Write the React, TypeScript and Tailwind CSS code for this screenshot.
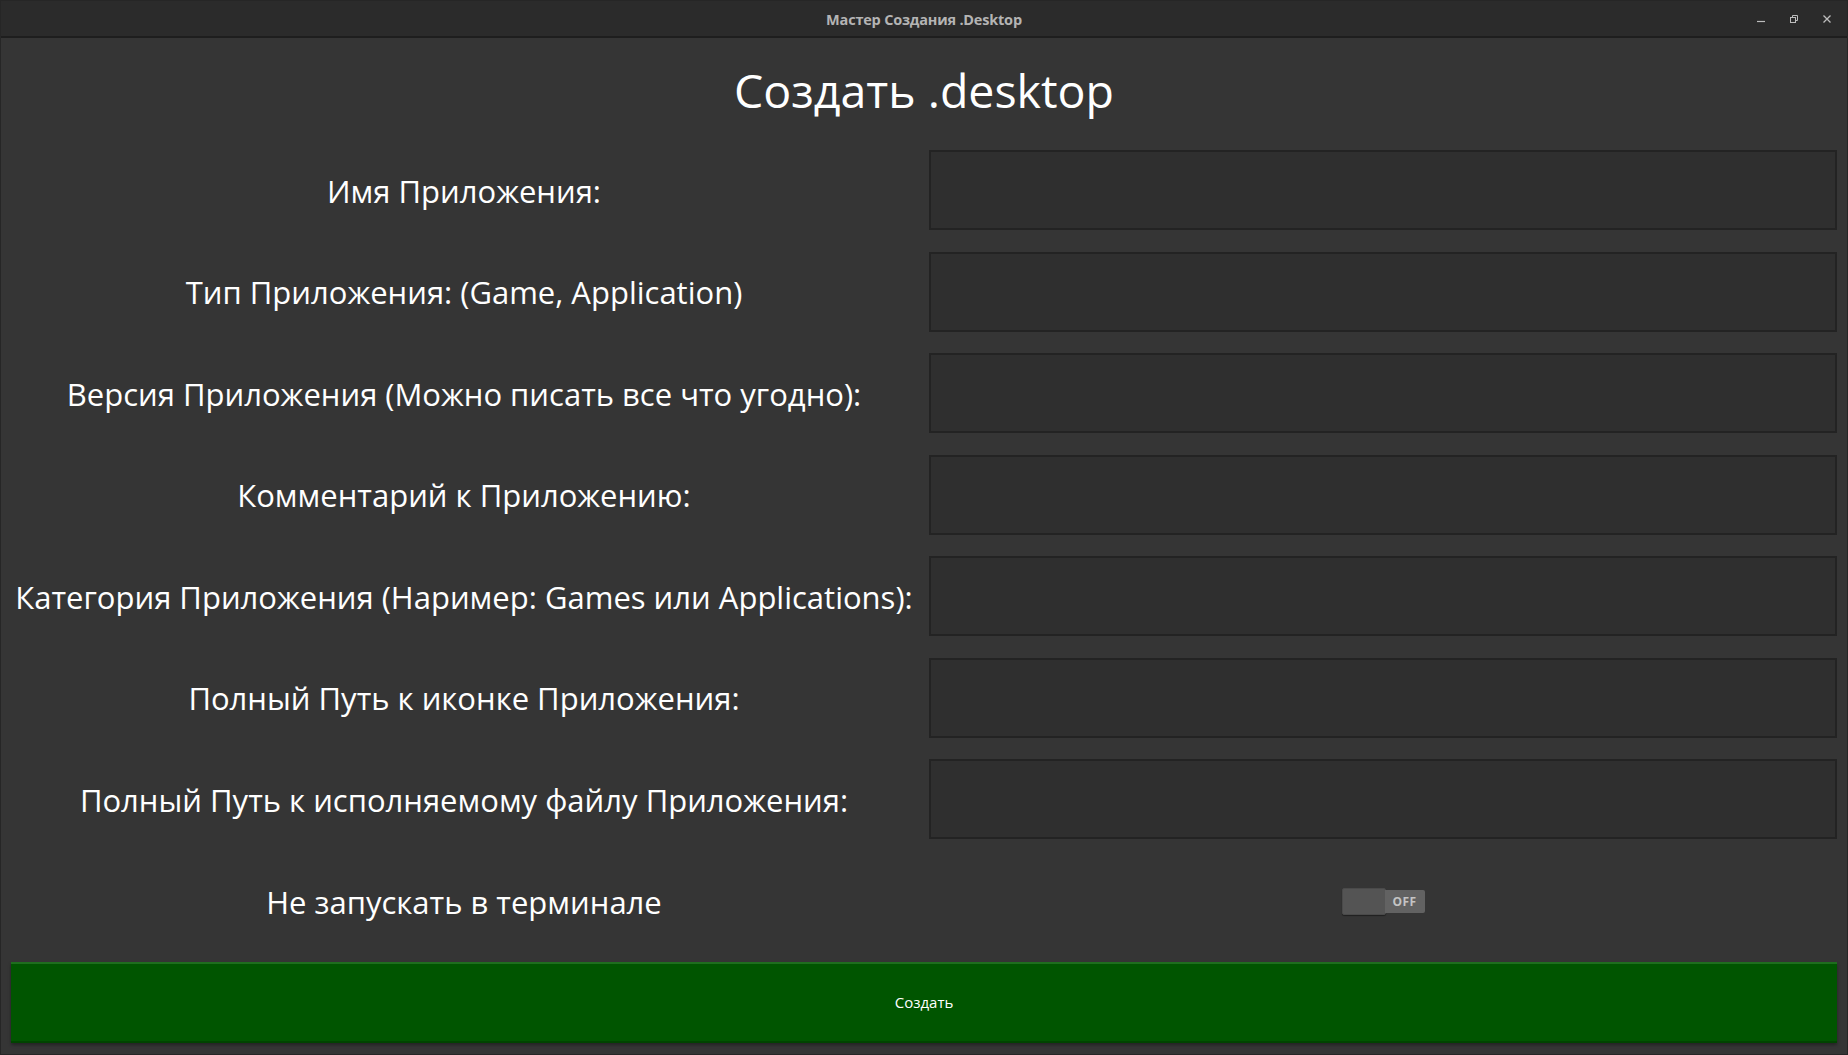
import { useState } from "react";

const fields = [
  "Имя Приложения:",
  "Тип Приложения: (Game, Application)",
  "Версия Приложения (Можно писать все что угодно):",
  "Комментарий к Приложению:",
  "Категория Приложения (Наример: Games или Applications):",
  "Полный Путь к иконке Приложения:",
  "Полный Путь к исполняемому файлу Приложения:",
];

export default function App() {
  const [values, setValues] = useState<string[]>(fields.map(() => ""));
  const [terminal, setTerminal] = useState(false);

  return (
    <div
      className="w-[1848px] h-[1055px] flex flex-col bg-[#353535] text-white border border-[#262626] overflow-hidden"
      style={{ fontFamily: '"Open Sans", "Noto Sans", sans-serif' }}
    >
      {/* title bar */}
      <div className="relative h-[37px] shrink-0 flex items-center justify-center bg-[#2b2b2b] border-b-2 border-[#1e1e1e]">
        <span className="text-[14.5px] font-bold text-[#b4b4b4] tracking-[-0.2px] pt-[2px]">
          Мастер Создания .Desktop
        </span>
        <div className="absolute right-0 top-0 h-full flex items-center gap-[21px] pr-[14px]">
          <svg width="12" height="12" viewBox="0 0 12 12">
            <path d="M2 8.5h8" stroke="#bdbdbd" strokeWidth="1.2" />
          </svg>
          <svg width="12" height="12" viewBox="0 0 12 12">
            <rect x="2.5" y="4.5" width="5" height="5" fill="none" stroke="#bdbdbd" strokeWidth="1" />
            <path d="M4.5 4.5V2.5h5v5h-2" fill="none" stroke="#bdbdbd" strokeWidth="1" />
          </svg>
          <svg width="12" height="12" viewBox="0 0 12 12">
            <path d="M2.5 2.5l7 7M9.5 2.5l-7 7" stroke="#bdbdbd" strokeWidth="1.3" />
          </svg>
        </div>
      </div>

      {/* heading */}
      <div className="h-[91px] shrink-0 flex items-center justify-center pt-[13px]">
        <h1 className="text-[46.5px] leading-none text-white">Создать .desktop</h1>
      </div>

      <div className="flex-1 flex flex-col px-[10px] pt-[21px] gap-[21.5px]">
        <div className="grid grid-cols-[906px_1fr] gap-x-[12px] gap-y-[21.5px]">
          {fields.map((label, i) => (
            <div key={label} className="contents">
              <div className="h-[80px] flex items-center justify-center pt-[2px] text-[31px] text-white whitespace-nowrap">
                {label}
              </div>
              <input
                type="text"
                value={values[i]}
                onChange={(e) => {
                  const next = [...values];
                  next[i] = e.target.value;
                  setValues(next);
                }}
                className="h-[80px] w-full bg-[#2f2f2f] border-2 border-[#232323] px-3 text-[20px] text-white outline-none"
              />
            </div>
          ))}
          {/* terminal switch */}
          <div className="h-[80px] flex items-center justify-center pt-[3px] text-[31px] text-white whitespace-nowrap">
            Не запускать в терминале
          </div>
          <div className="h-[80px] flex items-center justify-center pt-[2px]">
            <button
              type="button"
              onClick={() => setTerminal(!terminal)}
              className="flex items-center"
            >
              <span className="w-[44px] h-[27px] bg-[#545454] rounded-[2px] border border-[#4a4a4a] shadow-[0_1px_1px_rgba(0,0,0,0.4)]" />
              <span className="w-[40px] h-[23px] -ml-[1px] bg-[#626262] rounded-r-[2px] flex items-center justify-center text-[12px] font-bold text-[#c4c4c4] tracking-[0.5px]">
                {terminal ? "ON" : "OFF"}
              </span>
            </button>
          </div>
        </div>

        <button
          type="button"
          className="h-[81px] w-full bg-[#005500] border-t-2 border-[#1e6e1e] border-b-2 border-b-[#004400] text-[15px] text-white shadow-[0_2px_3px_rgba(0,0,0,0.35)]"
        >
          Создать
        </button>
      </div>
    </div>
  );
}
